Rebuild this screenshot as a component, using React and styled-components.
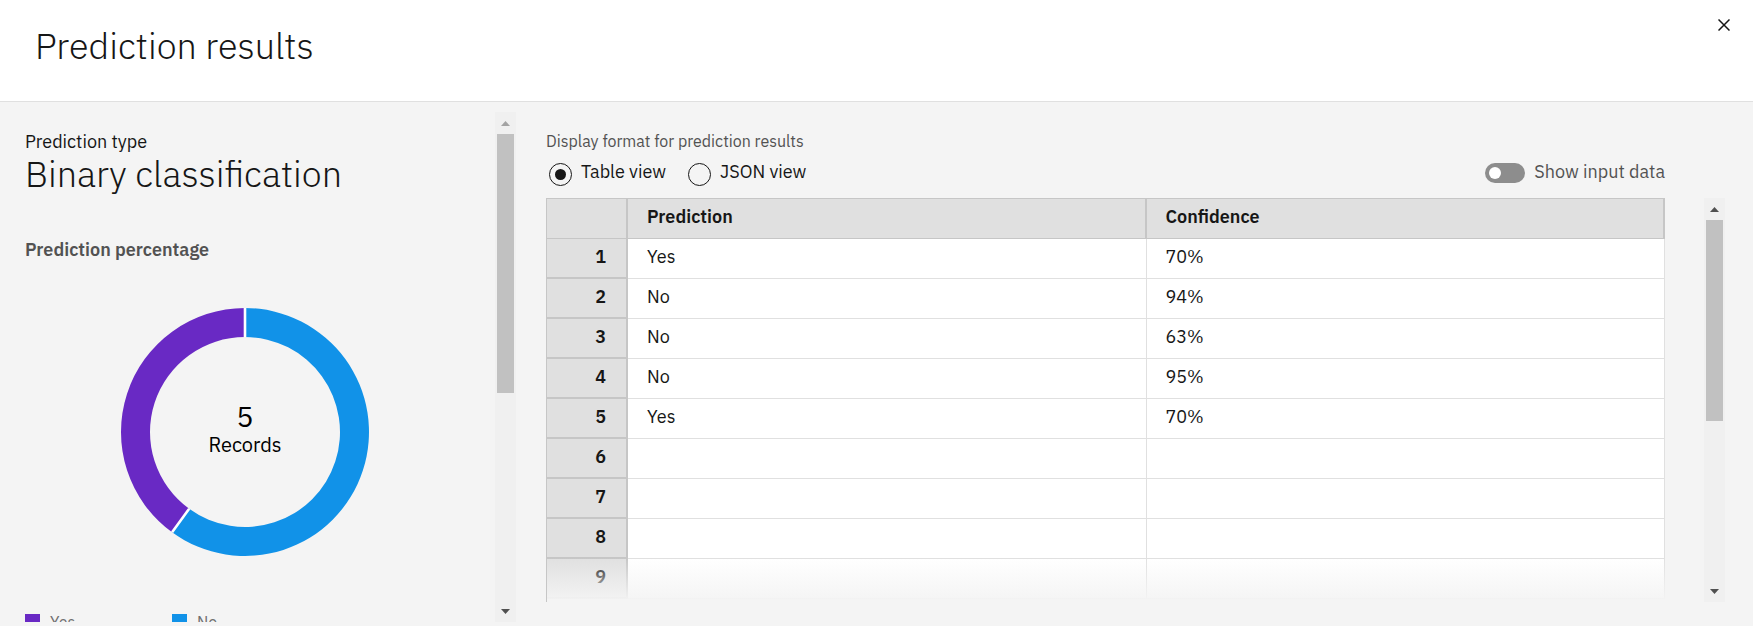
import React, { useState } from "react";
import styled, { createGlobalStyle, css } from "styled-components";

const GlobalStyle = createGlobalStyle`
  *, *::before, *::after { box-sizing: border-box; }
  body {
    margin: 0;
    background: #f4f4f4;
    color: #161616;
    font-family: "IBM Plex Sans", Roboto, "Liberation Sans", sans-serif;
    font-size: 18px;
    font-weight: 400;
    line-height: 24px;
  }
`;

const Modal = styled.div`
  display: flex;
  flex-direction: column;
  height: 100vh;
  overflow: hidden;
`;

const Header = styled.header`
  display: flex;
  justify-content: space-between;
  align-items: flex-start;
  height: 102px;
  flex: none;
  padding: 0 17px 0 35px;
  background: #fff;
  border-bottom: 1px solid #e0e0e0;
`;

const Title = styled.h1`
  margin: 24px 0 0;
  font-size: 36px;
  font-weight: 300;
  line-height: 44px;
`;

const CloseButton = styled.button`
  display: flex;
  align-items: center;
  justify-content: center;
  width: 24px;
  height: 24px;
  margin-top: 13px;
  padding: 0;
  border: 0;
  background: none;
  cursor: pointer;
`;

const Body = styled.main`
  display: flex;
  flex: 1;
  min-height: 0;
`;

const Summary = styled.aside`
  display: flex;
  flex: none;
  width: 516px;
  padding: 10px 0 4px 25px;
`;

const SummaryContent = styled.div`
  flex: 1;
  overflow: hidden;
  padding-top: 18px;
`;

const BigValue = styled.p`
  margin: 0;
  font-size: 36px;
  font-weight: 300;
  line-height: 40px;
`;

const SubHeading = styled.h2`
  margin: 44px 0 0;
  color: #525252;
  font-size: 18px;
  font-weight: 600;
  line-height: 24px;
`;

const Donut = styled.svg`
  display: block;
  width: 250px;
  height: 250px;
  margin: 45px 0 57px 95px;
`;

const Legend = styled.ul`
  display: flex;
  margin: 0;
  padding: 0;
  list-style: none;
  color: #6f6f6f;
  font-size: 16px;
  line-height: 16px;
`;

const LegendItem = styled.li`
  display: flex;
  gap: 10px;
  width: 147px;

  &::before {
    content: "";
    width: 15px;
    height: 15px;
    background: ${(p) => p.$color};
  }
`;

const Track = styled.div`
  display: flex;
  flex-direction: column;
  align-items: center;
  flex: none;
  width: 21px;
  background: #f0f0f0;
`;

const Thumb = styled.div`
  width: 17px;
  flex: ${(p) => p.$share} 0 0;
  background: #c1c1c1;
`;

const Rest = styled.div`
  flex: ${(p) => p.$share} 0 0;
`;

const ArrowButton = styled.button`
  display: flex;
  align-items: center;
  justify-content: center;
  width: 21px;
  height: 22px;
  padding: 0;
  border: 0;
  background: none;
  color: ${(p) => (p.disabled ? "#a3a3a3" : "#505050")};
`;

const Results = styled.section`
  display: flex;
  flex-direction: column;
  flex: 1;
  min-width: 0;
  padding: 28px 28px 24px 30px;
`;

const Controls = styled.div`
  display: flex;
  flex: none;
  justify-content: space-between;
  align-items: flex-end;
  height: 68px;
  margin-right: 60px;
  padding-bottom: 12px;
`;

const FormatGroup = styled.fieldset`
  min-width: 0;
  margin: 0;
  padding: 0;
  border: 0;
`;

const FormatLegend = styled.legend`
  padding: 0;
  color: #525252;
  font-size: 16px;
  line-height: 20px;
`;

const Options = styled.div`
  display: flex;
  gap: 19px;
  margin-top: 11px;
`;

const Option = styled.label`
  display: flex;
  gap: 9px;
  padding-left: 3px;
  cursor: pointer;
`;

const Radio = styled.input`
  appearance: none;
  display: grid;
  place-items: center;
  width: 23px;
  height: 23px;
  margin: 1px 0 0;
  border: 1px solid #161616;
  border-radius: 50%;

  &:checked::before {
    content: "";
    width: 11px;
    height: 11px;
    border-radius: 50%;
    background: #161616;
  }
`;

const OptionText = styled.span`
  line-height: 20px;
`;

const SwitchLabel = styled.label`
  display: flex;
  align-items: center;
  gap: 9px;
  margin-bottom: 2px;
  color: #525252;
  cursor: pointer;
`;

const Switch = styled.input`
  appearance: none;
  display: flex;
  align-items: center;
  width: 40px;
  height: 20px;
  margin: 2px 0 0;
  padding: 0 4px;
  border-radius: 10px;
  background: #8d8d8d;

  &::before {
    content: "";
    width: 12px;
    height: 12px;
    border-radius: 50%;
    background: #fff;
  }

  &:checked {
    justify-content: flex-end;
    background: #198038;
  }
`;

const GridArea = styled.div`
  display: flex;
  flex: 1;
  gap: 39px;
  min-height: 0;
`;

const GridViewport = styled.div`
  position: relative;
  flex: 1;
  min-width: 0;
  overflow: hidden;
  border-left: 1px solid #c6c6c6;

  &::after {
    content: "";
    position: absolute;
    inset: auto 0 0 0;
    height: 44px;
    background: linear-gradient(rgba(244, 244, 244, 0), #f4f4f4);
    pointer-events: none;
  }
`;

const Grid = styled.table`
  width: 100%;
  table-layout: fixed;
  border-collapse: separate;
  border-spacing: 0;
`;

const headCell = css`
  padding: 0 20px 3px 19px;
  border: 0 solid #c6c6c6;
  border-right-width: 2px;
  background: #e0e0e0;
  font-weight: 600;
`;

const ColumnHead = styled.th`
  ${headCell}
  width: ${(p) => p.$width || "auto"};
  height: 41px;
  border-top-width: 1px;
  border-bottom-width: 1px;
  text-align: left;
`;

const RowHead = styled.th`
  ${headCell}
  height: 40px;
  border-bottom-width: 2px;
  text-align: right;
`;

const Cell = styled.td`
  height: 40px;
  padding: 0 20px 4px 19px;
  border-right: 1px solid #e0e0e0;
  border-bottom: 1px solid #e0e0e0;
  background: #fff;
`;

const Scrollbar = ({ thumb, rest, atTop }) => (
  <Track>
    <ArrowButton aria-label="Scroll up" disabled={atTop}>
      <svg width="9" height="5" viewBox="0 0 9 5"><path d="M4.500 0L9 5H0z" fill="currentColor" /></svg>
    </ArrowButton>
    <Thumb $share={thumb} />
    <Rest $share={rest} />
    <ArrowButton aria-label="Scroll down">
      <svg width="9" height="5" viewBox="0 0 9 5"><path d="M0 0H9L4.500 5z" fill="currentColor" /></svg>
    </ArrowButton>
  </Track>
);

const records = [
  ["Yes", "70%"],
  ["No", "94%"],
  ["No", "63%"],
  ["No", "95%"],
  ["Yes", "70%"],
  ["", ""],
  ["", ""],
  ["", ""],
  ["", ""],
];

export default function App() {
  const [format, setFormat] = useState("table");
  const [showInput, setShowInput] = useState(false);

  return (
    <Modal>
      <GlobalStyle />
      <Header>
        <Title>Prediction results</Title>
        <CloseButton aria-label="Close">
          <svg width="12" height="12" viewBox="0 0 12 12" fill="none" stroke="#161616" strokeWidth="1.5">
            <path d="M0.500 0.500L11.500 11.500M11.500 0.500L0.500 11.500" />
          </svg>
        </CloseButton>
      </Header>
      <Body>
        <Summary>
          <SummaryContent>
            <div>Prediction type</div>
            <BigValue>Binary classification</BigValue>
            <SubHeading>Prediction percentage</SubHeading>
            <Donut viewBox="-125 -125 250 250" role="img" aria-label="Yes 40%, No 60%">
              <path d="M0 -124A124 124 0 1 1 -72.890 100.320L-55.840 76.860A95 95 0 1 0 0 -95z" fill="#1192e8" />
              <path d="M0 -124A124 124 0 0 0 -72.890 100.320L-55.840 76.860A95 95 0 0 1 0 -95z" fill="#6929c4" />
              <path d="M0 -124V-95M-72.890 100.320L-55.840 76.860" stroke="#fff" strokeWidth="2.600" />
              <g textAnchor="middle" fill="#000">
                <text y="-5" fontSize="29">5</text>
                <text y="20" fontSize="20">Records</text>
              </g>
            </Donut>
            <Legend>
              <LegendItem $color="#6929c4">Yes</LegendItem>
              <LegendItem $color="#1192e8">No</LegendItem>
            </Legend>
          </SummaryContent>
          <Scrollbar thumb={260} rest={208} atTop />
        </Summary>
        <Results>
          <Controls>
            <FormatGroup>
              <FormatLegend>Display format for prediction results</FormatLegend>
              <Options>
                <Option>
                  <Radio type="radio" name="format" checked={format === "table"} onChange={() => setFormat("table")} />
                  <OptionText>Table view</OptionText>
                </Option>
                <Option>
                  <Radio type="radio" name="format" checked={format === "json"} onChange={() => setFormat("json")} />
                  <OptionText>JSON view</OptionText>
                </Option>
              </Options>
            </FormatGroup>
            <SwitchLabel>
              <Switch type="checkbox" role="switch" checked={showInput} onChange={(e) => setShowInput(e.target.checked)} />
              Show input data
            </SwitchLabel>
          </Controls>
          <GridArea>
            <GridViewport>
              <Grid>
                <thead>
                  <tr>
                    <ColumnHead $width="81px" aria-label="Row" />
                    <ColumnHead scope="col">Prediction</ColumnHead>
                    <ColumnHead scope="col">Confidence</ColumnHead>
                  </tr>
                </thead>
                <tbody>
                  {records.map(([prediction, confidence], i) => (
                    <tr key={i}>
                      <RowHead scope="row">{i + 1}</RowHead>
                      <Cell>{prediction}</Cell>
                      <Cell>{confidence}</Cell>
                    </tr>
                  ))}
                </tbody>
              </Grid>
            </GridViewport>
            <Scrollbar thumb={202} rest={159} />
          </GridArea>
        </Results>
      </Body>
    </Modal>
  );
}
